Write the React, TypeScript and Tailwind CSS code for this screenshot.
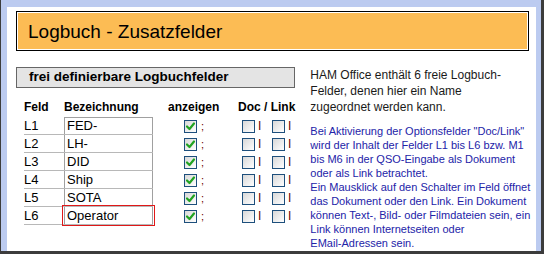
import React from "react";

const rows = [
    {id: "L1", name: "FED-"},
    {id: "L2", name: "LH-"},
    {id: "L3", name: "DID"},
    {id: "L4", name: "Ship"},
    {id: "L5", name: "SOTA"},
    {id: "L6", name: "Operator", focused: true},
];

const info = [
    'Bei Aktivierung der Optionsfelder "Doc/Link"',
    "wird der Inhalt der Felder L1 bis L6 bzw. M1",
    "bis M6 in der QSO-Eingabe als Dokument",
    "oder als Link betrachtet.",
    "Ein Mausklick auf den Schalter im Feld öffnet",
    "das Dokument oder den Link. Ein Dokument",
    "können Text-, Bild- oder Filmdateien sein, ein",
    "Link können Internetseiten oder",
    "EMail-Adressen sein.",
];

function Box({checked}: { checked?: boolean }) {
    return (
        <span className="flex h-[13px] w-[13px] items-center justify-center border border-[#1d4f7c] bg-gradient-to-br from-[#d8d8d8] to-white">
            {checked && (
                <svg width="11" height="11" viewBox="0 0 11 11">
                    <path d="M2 5.5 L4.5 8 L9 2.5" fill="none" stroke="#21a321" strokeWidth="2.2" strokeLinecap="round" strokeLinejoin="round"/>
                </svg>
            )}
        </span>
    );
}

export default function App() {
    return (
        <div className="h-[254px] w-[544px] bg-[#3c3c3c] pb-[3px] pl-px pr-[3px] font-['Liberation_Sans',Arial,sans-serif] text-black">
            <div className="h-full bg-[#bccbf0] pl-[6px] pr-[5px] pt-[7px]">
                <div className="h-full bg-white pl-[9px] pr-[7px] pt-[4px]">
                    <div className="h-[40px] border border-black p-px">
                        <div className="flex h-full items-center bg-[#fcbc54] pl-[10px] text-[19px] leading-none">
                            Logbuch - Zusatzfelder
                        </div>
                    </div>

                    <div className="mt-[16px] flex">
                        <div className="w-[281px]">
                            <div className="flex h-[21px] items-center border border-[#666] bg-[#e4e4e4] pl-[12px] text-[13.5px] font-bold">
                                frei definierbare Logbuchfelder
                            </div>

                            <div className="mt-[12px] flex h-[14px] items-center whitespace-nowrap pl-[8px] text-[12px] font-bold leading-none">
                                <span className="w-[40px]">Feld</span>
                                <span className="w-[104px]">Bezeichnung</span>
                                <span className="w-[70px]">anzeigen</span>
                                <span>Doc / Link</span>
                            </div>

                            <div className="mt-[3px] pl-[8px]">
                                {rows.map((r, i) => (
                                    <div key={r.id} className="flex h-[18px] items-stretch">
                                        <div className="flex w-[129px] border-b border-[#b8b8b8]">
                                            <span className="flex w-[40px] items-center text-[13px]">{r.id}</span>
                                            <span
                                                className={`relative flex w-[89px] items-center border-x border-[#a0a0a0] pl-[2px] text-[13px] ${i === 0 ? "border-t" : ""} ${r.focused ? "outline outline-1 outline-offset-1 outline-[#e01818]" : ""}`}>
                                                {r.name}
                                            </span>
                                        </div>
                                        <div className="ml-[31px] flex w-[58px] items-center gap-[4px]">
                                            <Box checked/>
                                            <span className="text-[11px] text-[#6b0000]">;</span>
                                        </div>
                                        <div className="flex w-[30px] items-center gap-[3px]">
                                            <Box/>
                                            <span className="text-[12px] text-[#6b0000]">I</span>
                                        </div>
                                        <div className="flex items-center gap-[3px]">
                                            <Box/>
                                            <span className="text-[12px] text-[#6b0000]">I</span>
                                        </div>
                                    </div>
                                ))}
                            </div>
                        </div>

                        <div className="ml-[15px] whitespace-nowrap">
                            <p className="text-[12px] leading-[16px] text-[#1a1a1a]">
                                HAM Office enthält 6 freie Logbuch-<br/>
                                Felder, denen hier ein Name<br/>
                                zugeordnet werden kann.
                            </p>
                            <p className="mt-[9px] text-[11px] leading-[14px] text-[#2323a8]">
                                {info.map((l) => (
                                    <React.Fragment key={l}>
                                        {l}
                                        <br/>
                                    </React.Fragment>
                                ))}
                            </p>
                        </div>
                    </div>
                </div>
            </div>
        </div>
    );
}
